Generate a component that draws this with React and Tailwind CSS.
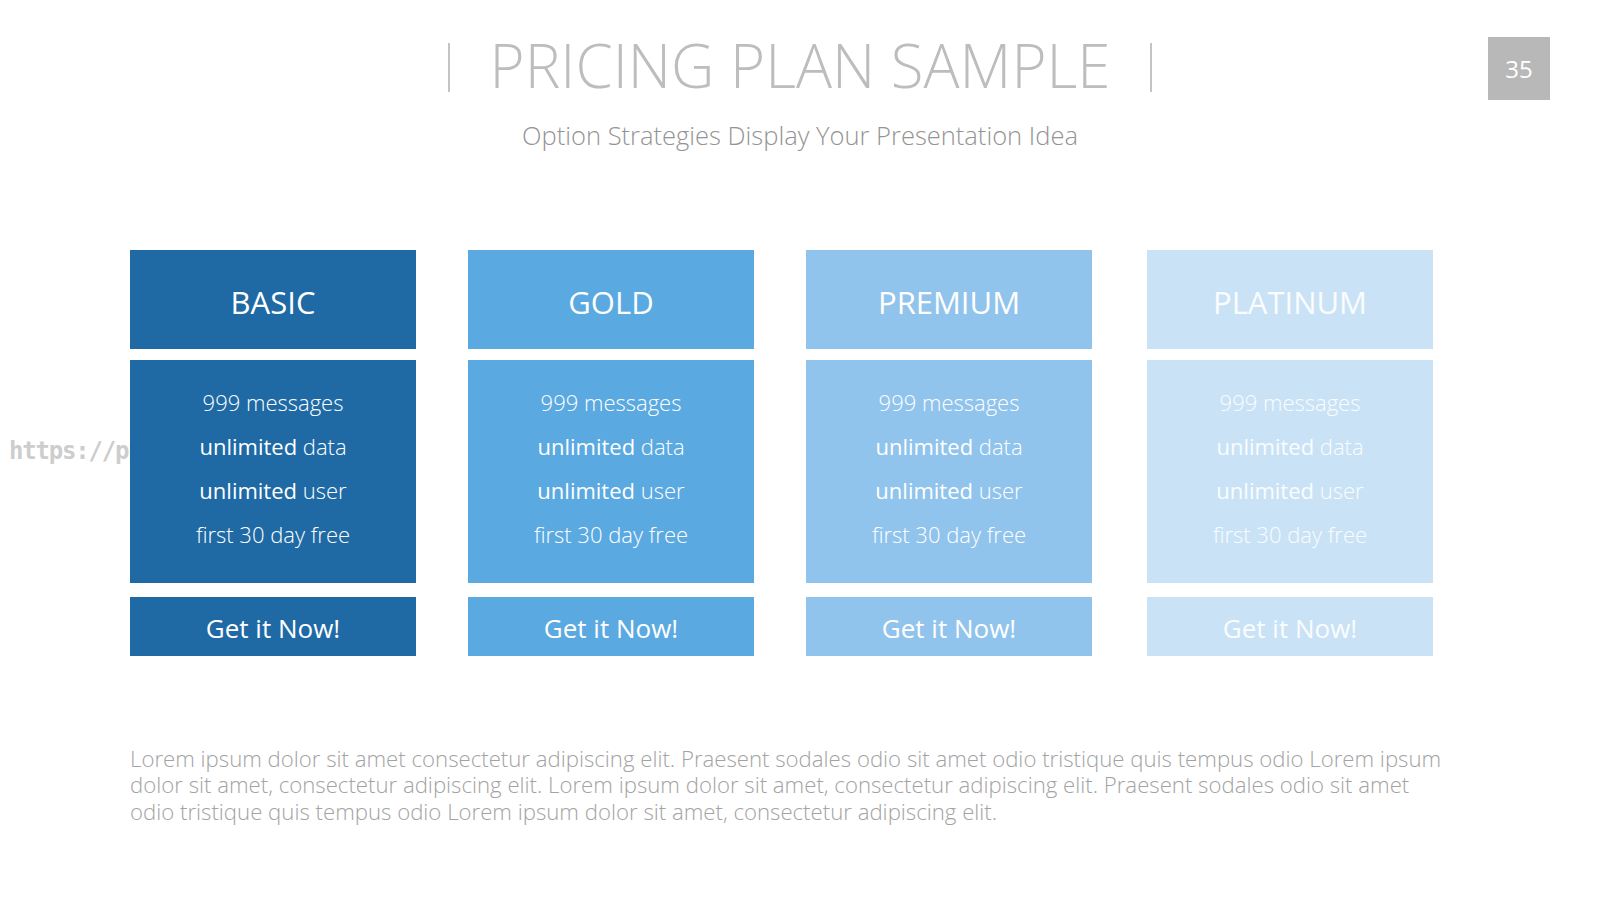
import React from "react";

const plans = [
  { name: "BASIC", bg: "bg-[#1f6aa5]", text: "text-white" },
  { name: "GOLD", bg: "bg-[#5ba9e1]", text: "text-white" },
  { name: "PREMIUM", bg: "bg-[#91c4ec]", text: "text-white" },
  { name: "PLATINUM", bg: "bg-[#c9e2f5]", text: "text-white/90" },
];

const PlanCard = ({ plan, className = "" }) => (
  <div className={`w-[286px] flex flex-col ${className}`}>
    {/* header */}
    <div
      className={`${plan.bg} ${plan.text} h-[99px] flex items-center justify-center pt-[7px] text-[31px] leading-none`}
    >
      {plan.name}
    </div>

    {/* features */}
    <div
      className={`${plan.bg} ${plan.text} mt-[11px] h-[223px] pt-[20px] flex flex-col items-center text-[22px] leading-[44px] font-light`}
    >
      <p>999 messages</p>
      <p>
        <span className="font-medium">unlimited</span> data
      </p>
      <p>
        <span className="font-medium">unlimited</span> user
      </p>
      <p>first 30 day free</p>
    </div>

    {/* button */}
    <button
      className={`${plan.bg} ${plan.text} mt-[14px] h-[59px] flex items-center justify-center pt-[3px] text-[26px] leading-none`}
    >
      Get it Now!
    </button>
  </div>
);

export default function App() {
  return (
    <div className="relative w-[1600px] h-[900px] bg-white overflow-hidden font-['Open_Sans',sans-serif]">
      {/* watermark */}
      <div className="absolute left-[9px] top-[433px] text-[24px] font-bold text-[#cdcdcd] font-['DejaVu_Sans_Mono',monospace] tracking-tighter">
        https://ppt
      </div>

      {/* page number */}
      <div className="absolute top-[37px] right-[50px] w-[62px] h-[63px] bg-[#b8b8b8] text-white text-[24px] flex items-center justify-center">
        35
      </div>

      <div className="pt-[35px] flex flex-col items-center">
        <div className="h-[60px] flex items-center">
          <div className="w-[2px] h-[49px] mt-[5px] bg-[#c4c4c4]" />
          <h1 className="mx-[40px] text-[60px] leading-none font-light text-[#bdbdbd]">
            PRICING PLAN SAMPLE
          </h1>
          <div className="w-[2px] h-[49px] mt-[5px] bg-[#c4c4c4]" />
        </div>
        <p className="mt-[28px] text-[25.5px] leading-none font-light text-[#949494]">
          Option Strategies Display Your Presentation Idea
        </p>
      </div>

      <div className="relative z-10 mt-[101px] pl-[130px] flex gap-[52px]">
        {plans.map((p, i) => (
          <PlanCard key={p.name} plan={p} className={i === 3 ? "ml-[3px]" : ""} />
        ))}
      </div>

      <p className="mt-[90px] ml-[130px] w-[1360px] text-[22.2px] leading-[26.5px] font-light text-[#a3a3a3]">
        Lorem ipsum dolor sit amet consectetur adipiscing elit. Praesent sodales odio sit amet odio tristique quis tempus odio Lorem ipsum
        <br />
        dolor sit amet, consectetur adipiscing elit. Lorem ipsum dolor sit amet, consectetur adipiscing elit. Praesent sodales odio sit amet
        <br />
        odio tristique quis tempus odio Lorem ipsum dolor sit amet, consectetur adipiscing elit.
      </p>
    </div>
  );
}
